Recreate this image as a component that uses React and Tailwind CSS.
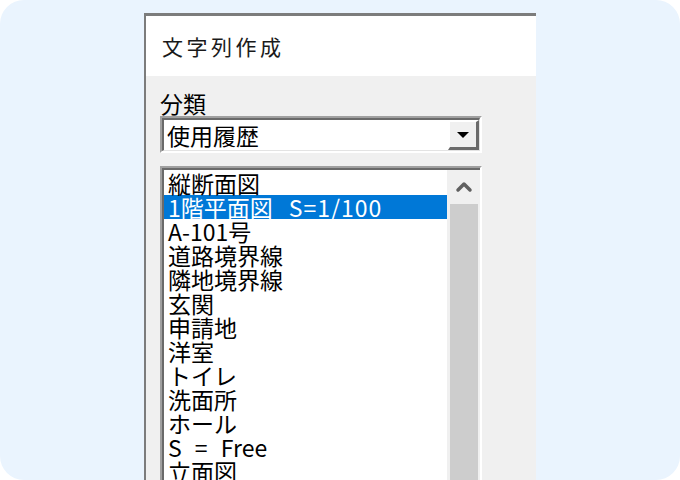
import { ChevronUp } from "lucide-react";

const items = [
  ["縦断面図"],
  ["1階平面図", "S=1/100"],
  ["A-101号"],
  ["道路境界線"],
  ["隣地境界線"],
  ["玄関"],
  ["申請地"],
  ["洋室"],
  ["トイレ"],
  ["洗面所"],
  ["ホール"],
  ["S = Free"],
  ["立面図"],
];

export default function App() {
  return (
    <div className="w-[680px] h-[480px] bg-white">
      <div
        className="w-[680px] h-[480px] rounded-[24px] bg-[#eaf4fe] overflow-hidden pl-[144px] pt-[13px]"
        style={{ fontFamily: '"Noto Sans CJK JP", "Noto Sans", sans-serif' }}
      >
        <div className="w-[392px] h-[520px] border-t-[3px] border-l-[2px] border-[#7c7c7c] flex flex-col">
          {/* title bar */}
          <div className="h-[60px] bg-white flex items-center pl-[16px] shrink-0">
            <span className="text-[21px] leading-none tracking-[3.5px] text-[#1a1a1a]">文字列作成</span>
          </div>

          {/* body */}
          <div className="flex-1 bg-[#f0f0f0] pl-[14px] pt-[14px]">
            <div className="text-[23px] leading-[26px] text-black">分類</div>

            {/* combo box */}
            <div className="w-[322px] h-[37px] border-t-2 border-l-2 border-t-[#a0a0a0] border-l-[#a0a0a0] border-b-2 border-r-2 border-b-white border-r-white">
              <div className="h-full border-t-2 border-l-2 border-t-[#6a6a6a] border-l-[#6a6a6a] border-b border-r border-b-[#e3e3e3] border-r-[#e3e3e3] bg-white flex items-center">
                <span className="flex-1 pl-[3px] text-[23px] leading-none text-black">使用履歴</span>
                <div className="w-[31px] h-full bg-[#f0f0f0] border-t-2 border-l-2 border-t-white border-l-white border-b-[3px] border-r-[3px] border-b-[#6a6a6a] border-r-[#6a6a6a] flex items-center justify-center">
                  <svg width="14" height="8" viewBox="0 0 14 8">
                    <path d="M1 1 L13 1 L7 7 Z" fill="#000" />
                  </svg>
                </div>
              </div>
            </div>

            {/* list box */}
            <div className="mt-[13px] w-[322px] h-[340px] border-t-2 border-l-2 border-t-[#a0a0a0] border-l-[#a0a0a0] border-r-2 border-r-white">
              <div className="h-full border-t-2 border-l-2 border-t-[#6a6a6a] border-l-[#6a6a6a] bg-white flex">
                <div className="flex-1 pt-[1px]">
                  {items.map(([t, s], i) => (
                    <div
                      key={t}
                      className={
                        "h-[24px] pl-[4px] text-[23px] leading-[24px] whitespace-pre [word-spacing:8px] " +
                        (i === 1 ? "bg-[#0078d7] text-white" : "text-black")
                      }
                    >
                      {t}
                      {s && <span className="ml-[16px] tracking-[1px]">{s}</span>}
                    </div>
                  ))}
                </div>
                <div className="w-[33px] bg-[#f0f0f0] flex flex-col items-center">
                  <div className="h-[34px] w-full flex items-center justify-center">
                    <ChevronUp size={24} strokeWidth={3.5} color="#606060" />
                  </div>
                  <div className="w-[28px] flex-1 bg-[#cdcdcd]" />
                </div>
              </div>
            </div>
          </div>
        </div>
      </div>
    </div>
  );
}
